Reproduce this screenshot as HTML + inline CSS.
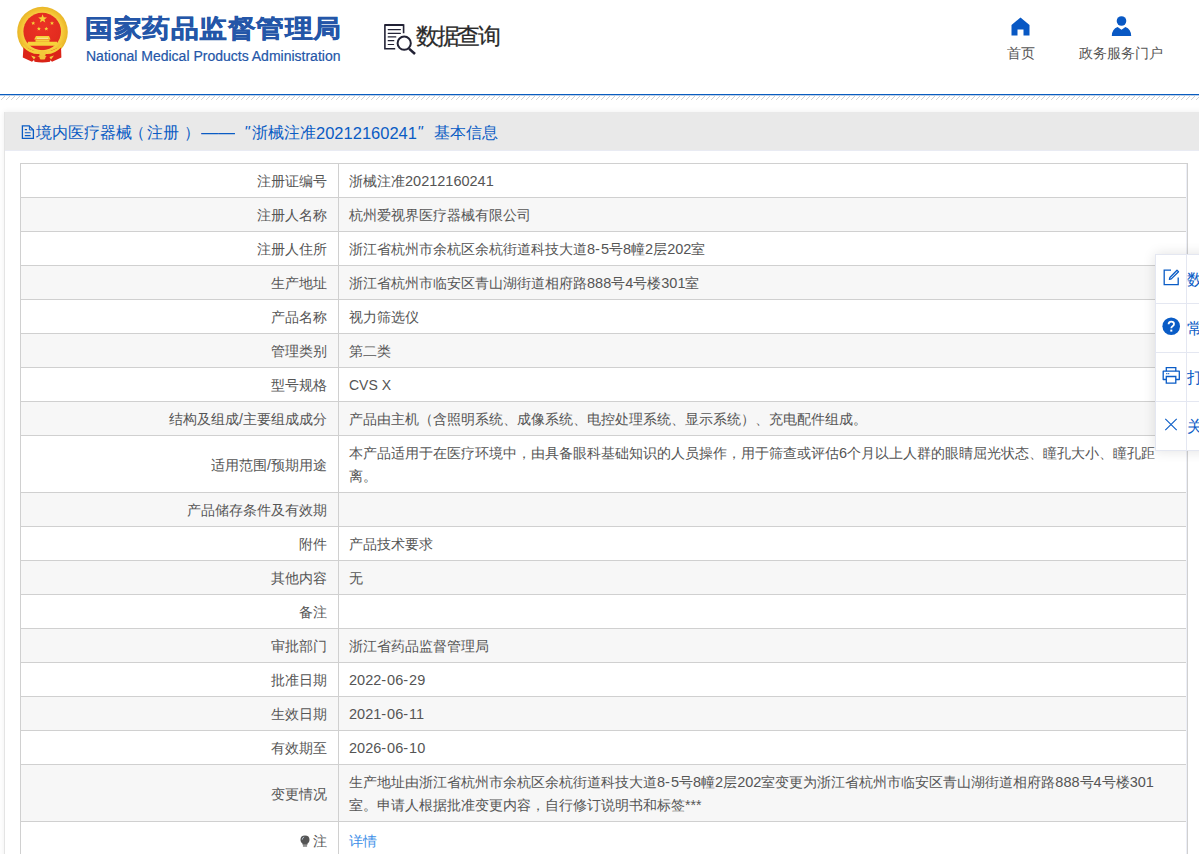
<!DOCTYPE html>
<html><head><meta charset="utf-8">
<style>
*{box-sizing:border-box}
html,body{margin:0;padding:0;background:#fff;width:1199px;height:854px;overflow:hidden;font-family:"Liberation Sans",sans-serif;}
.abs{position:absolute}
#emblem{left:15px;top:5px;width:56px;height:60px}
#t1{left:85px;top:9px;font-size:28px;font-weight:bold;color:#2456a8;line-height:40px;white-space:nowrap;letter-spacing:0.5px;-webkit-text-stroke:0.5px #2456a8;transform:translateY(0.5px) scaleY(0.9);transform-origin:50% 18.5px}
#t2{left:86px;top:47px;font-size:14px;color:#2456a8;line-height:18px;white-space:nowrap;-webkit-text-stroke:0.2px #2456a8}
#sq{left:380px;top:20px;width:40px;height:38px}
#sqt{left:416px;top:19.5px;font-size:23px;letter-spacing:-2.3px;-webkit-text-stroke:0.25px #2a2a2a;color:#2a2a2a;line-height:32px;white-space:nowrap}
.nav{position:absolute;top:14px;text-align:center;font-size:14px;color:#555;line-height:20px;white-space:nowrap}
#blue{left:0;top:94px;width:1199px;height:1px;background:#0a5cbf;box-shadow:0 1px 0 rgba(10,92,191,0.3)}
#hatch{left:0;top:94px;width:1199px;height:6px}
#panel{left:4px;top:112px;width:1210px;height:760px;background:#fff;border:1px solid #e4e4e4;border-top:0;box-shadow:0 0 6px rgba(0,0,0,0.07)}
#phead{position:absolute;left:0;top:0;width:100%;height:39px;background:#e9e9e9;border-bottom:1px solid #e9ebf3}
#ptitle{position:absolute;left:31px;top:9px;font-size:16px;color:#0a5cc4;line-height:24px;white-space:nowrap}
#ptitle>span{position:absolute;top:0;text-spacing-trim:space-all}
#picon{position:absolute;left:16px;top:12.5px;width:14px;height:15px}
table{position:absolute;left:15px;top:51px;width:1168px;border-collapse:collapse;font-size:14px;color:#555}
td{border:1px solid #d0d0d0;padding:6px 10px 4px;line-height:23px;vertical-align:middle}
.d{font-size:14.5px}
.h{letter-spacing:1px}
td.l{width:318px;text-align:right;padding-right:11px}
tr:nth-child(even) td{background:#f7f7f7}
#tool{left:1155px;top:254px;width:60px;height:197px;background:#fff;box-shadow:0 0 12px rgba(0,0,0,0.12);border:1px solid #e4e7f1}
.tt{left:1187px;font-size:16px;line-height:22px;color:#0a5cc6;white-space:nowrap}
</style></head><body>
<svg id="emblem" class="abs" width="56" height="60" viewBox="15 5 56 60">
  <defs>
    <radialGradient id="gold" cx="50%" cy="50%" r="50%"><stop offset="0.7" stop-color="#f8d448"/><stop offset="0.86" stop-color="#f3c233"/><stop offset="1" stop-color="#e8b628"/></radialGradient>
    <radialGradient id="redg" cx="50%" cy="40%" r="60%"><stop offset="0" stop-color="#ec3325"/><stop offset="1" stop-color="#e02a1e"/></radialGradient>
  </defs>
  <circle cx="42.5" cy="32" r="25.3" fill="url(#gold)"/>
  <circle cx="42.2" cy="31.5" r="18.8" fill="url(#redg)"/>
  <path d="M23.5 46.5 L22.8 57.5 L32 61.8 L41 54 Z" fill="#dc2418"/>
  <path d="M61 46.5 L61.4 57.5 L52 61.8 L43.5 54 Z" fill="#dc2418"/>
  <path d="M33.5 58 Q42.5 54.5 51 58 L50 61.8 Q42.5 63 34.5 61.8 Z" fill="#d92216"/>
  <path d="M22.5 44 Q32 53.5 42.5 50.5 Q53 53.5 62 44 L61 47.5 Q53 56 42.5 53.5 Q32 56 23.5 47.5 Z" fill="#f5cf3a"/>
  <path d="M38 52.5 Q42.5 48 47 52.5 Q45 56 42.5 56 Q40 56 38 52.5Z" fill="#f2c93a"/>
  <path d="M31 55.6 L35.6 57 L34 59.6 Z M54 55.6 L49.4 57 L51 59.6 Z" fill="#f0d040"/>
  <path d="M39 56 Q42.5 54.5 46 56 L45 59.2 Q42.5 60 40 59.2 Z" fill="#f2c43a"/>
  <g fill="#f6d23a">
    <polygon points="42.6,14.2 43.7,17.3 47,17.4 44.4,19.4 45.3,22.5 42.6,20.7 39.9,22.5 40.8,19.4 38.2,17.4 41.5,17.3"/>
    <polygon points="33.2,21.2 33.8,22.5 35.2,22.6 34.1,23.5 34.5,24.9 33.2,24.1 31.9,24.9 32.3,23.5 31.2,22.6 32.6,22.5"/>
    <polygon points="52,21.2 52.6,22.5 54,22.6 52.9,23.5 53.3,24.9 52,24.1 50.7,24.9 51.1,23.5 50,22.6 51.4,22.5"/>
    <polygon points="38.9,26.8 39.5,28.1 40.9,28.2 39.8,29.1 40.2,30.5 38.9,29.7 37.6,30.5 38,29.1 36.9,28.2 38.3,28.1"/>
    <polygon points="46.3,26.8 46.9,28.1 48.3,28.2 47.2,29.1 47.6,30.5 46.3,29.7 45,30.5 45.4,29.1 44.3,28.2 45.7,28.1"/>
    <path d="M36 36 H49 L50.5 39.6 H34.2 Z"/>
    <rect x="35.5" y="39.6" width="14" height="2.2"/>
    <path d="M28 41.8 H57 V45.8 H27.4 Z"/>
  </g>
  <rect x="37" y="37.8" width="11" height="1" fill="#fbe9a0"/>
</svg>
<div id="t1" class="abs">国家药品监督管理局</div>
<div id="t2" class="abs">National Medical Products Administration</div>
<svg id="sq" class="abs" width="40" height="38" viewBox="0 0 40 38">
  <path d="M15.2 28.8 H4.9 V5 H23.6 V13.2" fill="none" stroke="#222235" stroke-width="1.6"/>
  <path d="M4.9 5 H23.6" stroke="#222235" stroke-width="2"/>
  <path d="M8.2 9.6 H20.4 M8.2 13.3 H20.4 M8.2 16.9 H15.8 M8.2 20.7 H13.8 M8.2 24.5 H13.6" stroke="#222235" stroke-width="1.2" stroke-linecap="round"/>
  <circle cx="24.2" cy="23.2" r="6.6" fill="none" stroke="#222235" stroke-width="2"/>
  <path d="M29 28.6 L35 34" stroke="#222235" stroke-width="2.6" stroke-linecap="butt"/>
</svg>
<div id="sqt" class="abs">数据查询</div>

<div class="nav" style="left:1001px;width:40px">
  <svg width="19" height="19" viewBox="0 0 19 19" style="display:block;margin:3px auto 0;position:relative;left:-0.5px"><path d="M9.5 0.5 L18.5 8 V18.5 H12.5 V12.5 H6.5 V18.5 H0.5 V8 Z" fill="#0858c4"/></svg>
  <div style="margin-top:7px">首页</div>
</div>
<div class="nav" style="left:1075px;width:92px">
  <svg width="21" height="20" viewBox="0 0 21 20" style="display:block;margin:2px auto 0;position:relative;left:0.5px"><circle cx="10.5" cy="5" r="4.8" fill="#0858c4"/><path d="M0.8 20 Q1 12.8 6.6 11 L10.5 13.8 L14.4 11 Q20 12.8 20.2 20 Z" fill="#0858c4"/></svg>
  <div style="margin-top:7px">政务服务门户</div>
</div>

<div id="blue" class="abs"></div>
<svg id="hatch" class="abs" width="1199" height="6">
  <defs><pattern id="hp" x="1" width="5" height="6" patternUnits="userSpaceOnUse">
    <g fill="#d2d2d2"><rect x="4" y="1" width="1" height="1"/><rect x="3" y="2" width="1" height="1"/><rect x="2" y="3" width="1" height="1"/><rect x="1" y="4" width="1" height="1"/><rect x="0" y="5" width="1" height="1"/></g>
  </pattern></defs>
  <rect x="1" width="1199" height="6" fill="url(#hp)" shape-rendering="crispEdges"/>
</svg>

<div id="panel" class="abs">
  <div id="phead">
    <svg id="picon" viewBox="0 0 14 15"><path d="M1.4 0.9 H8.2 L12.4 5.1 V13.4 H1.4 Z" fill="none" stroke="#0a5cc4" stroke-width="1.3" stroke-linejoin="miter"/><path d="M8.4 0.9 V4.9 H12.4" fill="none" stroke="#0a5cc4" stroke-width="1"/><path d="M3.8 4.6 H6 M3.8 7.7 H9.6 M3.8 10.6 H9.6" stroke="#0a5cc4" stroke-width="1.1"/></svg>
    <div id="ptitle"><span style="left:0">境内医疗器械</span><span style="left:93px">（</span><span style="left:111px">注册</span><span style="left:147.5px">）</span><span style="left:165px;width:36px;display:inline-block;overflow:hidden"><span style="position:static;display:inline-block;transform:scaleX(1.06);transform-origin:0 0">——</span></span><span style="left:208px;font-style:italic">&quot;</span><span style="left:216px">浙械注准</span><span style="left:280px;font-size:16.5px">20212160241</span><span style="left:381px;font-style:italic">&quot;</span><span style="left:398px">基本信息</span></div>
  </div>
  <table>
    <tr><td class="l">注册证编号</td><td>浙械注准<span class="d">20212160241</span></td></tr>
    <tr><td class="l">注册人名称</td><td>杭州爱视界医疗器械有限公司</td></tr>
    <tr><td class="l">注册人住所</td><td>浙江省杭州市余杭区余杭街道科技大道<span class="d">8<span class="h">-</span>5</span>号<span class="d">8</span>幢<span class="d">2</span>层<span class="d">202</span>室</td></tr>
    <tr><td class="l">生产地址</td><td>浙江省杭州市临安区青山湖街道相府路<span class="d">888</span>号<span class="d">4</span>号楼<span class="d">301</span>室</td></tr>
    <tr><td class="l">产品名称</td><td>视力筛选仪</td></tr>
    <tr><td class="l">管理类别</td><td>第二类</td></tr>
    <tr><td class="l">型号规格</td><td>CVS X</td></tr>
    <tr><td class="l">结构及组成/主要组成成分</td><td>产品由主机（含照明系统、成像系统、电控处理系统、显示系统）、充电配件组成。</td></tr>
    <tr><td class="l">适用范围/预期用途</td><td>本产品适用于在医疗环境中，由具备眼科基础知识的人员操作，用于筛查或评估<span class="d">6</span>个月以上人群的眼睛屈光状态、瞳孔大小、瞳孔距离。</td></tr>
    <tr><td class="l">产品储存条件及有效期</td><td></td></tr>
    <tr><td class="l">附件</td><td>产品技术要求</td></tr>
    <tr><td class="l">其他内容</td><td>无</td></tr>
    <tr><td class="l">备注</td><td></td></tr>
    <tr><td class="l">审批部门</td><td>浙江省药品监督管理局</td></tr>
    <tr><td class="l">批准日期</td><td><span class="d">2022<span class="h">-</span>06<span class="h">-</span>29</span></td></tr>
    <tr><td class="l">生效日期</td><td><span class="d">2021<span class="h">-</span>06<span class="h">-</span>11</span></td></tr>
    <tr><td class="l">有效期至</td><td><span class="d">2026<span class="h">-</span>06<span class="h">-</span>10</span></td></tr>
    <tr><td class="l">变更情况</td><td>生产地址由浙江省杭州市余杭区余杭街道科技大道<span class="d">8<span class="h">-</span>5</span>号<span class="d">8</span>幢<span class="d">2</span>层<span class="d">202</span>室变更为浙江省杭州市临安区青山湖街道相府路<span class="d">888</span>号<span class="d">4</span>号楼<span class="d">301</span>室。申请人根据批准变更内容，自行修订说明书和标签***</td></tr>
    <tr><td class="l" style="padding-top:8px;padding-bottom:2px"><svg width="10" height="12" viewBox="0 0 11 13" style="vertical-align:-1px;margin-right:3.5px"><path d="M5.5 0.5 Q10.5 0.5 10.5 5.3 Q10.5 7.6 8.2 9.5 V10.5 H2.8 V9.5 Q0.5 7.6 0.5 5.3 Q0.5 0.5 5.5 0.5Z" fill="#555"/><rect x="3.2" y="11.3" width="4.6" height="1.3" fill="#555"/><path d="M2.5 5 Q2.6 2.6 4.6 2.1" stroke="#bcd" stroke-width="1" fill="none"/></svg>注</td><td style="color:#3d8fe8;padding-top:8px;padding-bottom:2px">详情</td></tr>
  </table>
</div>

<div class="abs" style="left:1186px;top:164px;width:1px;height:690px;background:#eceef6"></div>
<div id="tool" class="abs"></div>
<div class="abs" style="left:1155px;top:303px;width:44px;height:1px;background:#e4e7f1"></div>
<div class="abs" style="left:1155px;top:352px;width:44px;height:1px;background:#e4e7f1"></div>
<div class="abs" style="left:1155px;top:401px;width:44px;height:1px;background:#e4e7f1"></div>
<div class="abs" style="left:1186px;top:255px;width:1px;height:196px;background:#e4e7f1"></div>
<svg class="abs" style="left:1162px;top:268px" width="18" height="19" viewBox="0 0 18 19">
  <path d="M9 2.2 H2.2 V16.7 H16.2 V9.5" fill="none" stroke="#0a5cc6" stroke-width="1.3"/>
  <path d="M15 2.2 L16.5 3.7 L9.3 10.9 L7.4 11.4 L7.9 9.5 Z" fill="none" stroke="#0a5cc6" stroke-width="1.3" stroke-linejoin="round"/>
</svg>
<svg class="abs" style="left:1162px;top:317px" width="19" height="19" viewBox="0 0 19 19">
  <circle cx="9.2" cy="9.2" r="8.8" fill="#0a5cc6"/>
  <path d="M6.6 7.3 Q6.6 4.6 9.3 4.6 Q12 4.6 12 7 Q12 8.4 10.5 9.3 Q9.3 10 9.3 11.3" fill="none" stroke="#fff" stroke-width="1.8"/>
  <rect x="8.3" y="12.6" width="2" height="2" fill="#fff"/>
</svg>
<svg class="abs" style="left:1162px;top:366px" width="19" height="19" viewBox="0 0 19 19">
  <path d="M4.3 5.2 V1.6 H13.8 V5.2" fill="none" stroke="#0a5cc6" stroke-width="1.3"/>
  <path d="M4.3 13.5 H1.2 V5.2 H17.3 V13.5 H13.8" fill="none" stroke="#0a5cc6" stroke-width="1.3" stroke-linejoin="round"/>
  <path d="M4.3 17.2 V10.5 H13.8 V17.2 Z" fill="none" stroke="#0a5cc6" stroke-width="1.3"/>
  <path d="M4.2 7.6 H7.2" stroke="#0a5cc6" stroke-width="1.1" stroke-dasharray="1.2 0.8"/>
</svg>
<svg class="abs" style="left:1164px;top:417px" width="14" height="15" viewBox="0 0 14 15">
  <path d="M1.3 1.8 L12.7 13.2 M12.7 1.8 L1.3 13.2" stroke="#0a5cc6" stroke-width="1.1"/>
</svg>
<div class="abs tt" style="top:269px">数据</div>
<div class="abs tt" style="top:318px">常见</div>
<div class="abs tt" style="top:367px">打印</div>
<div class="abs tt" style="top:416px">关闭</div>

</body></html>
